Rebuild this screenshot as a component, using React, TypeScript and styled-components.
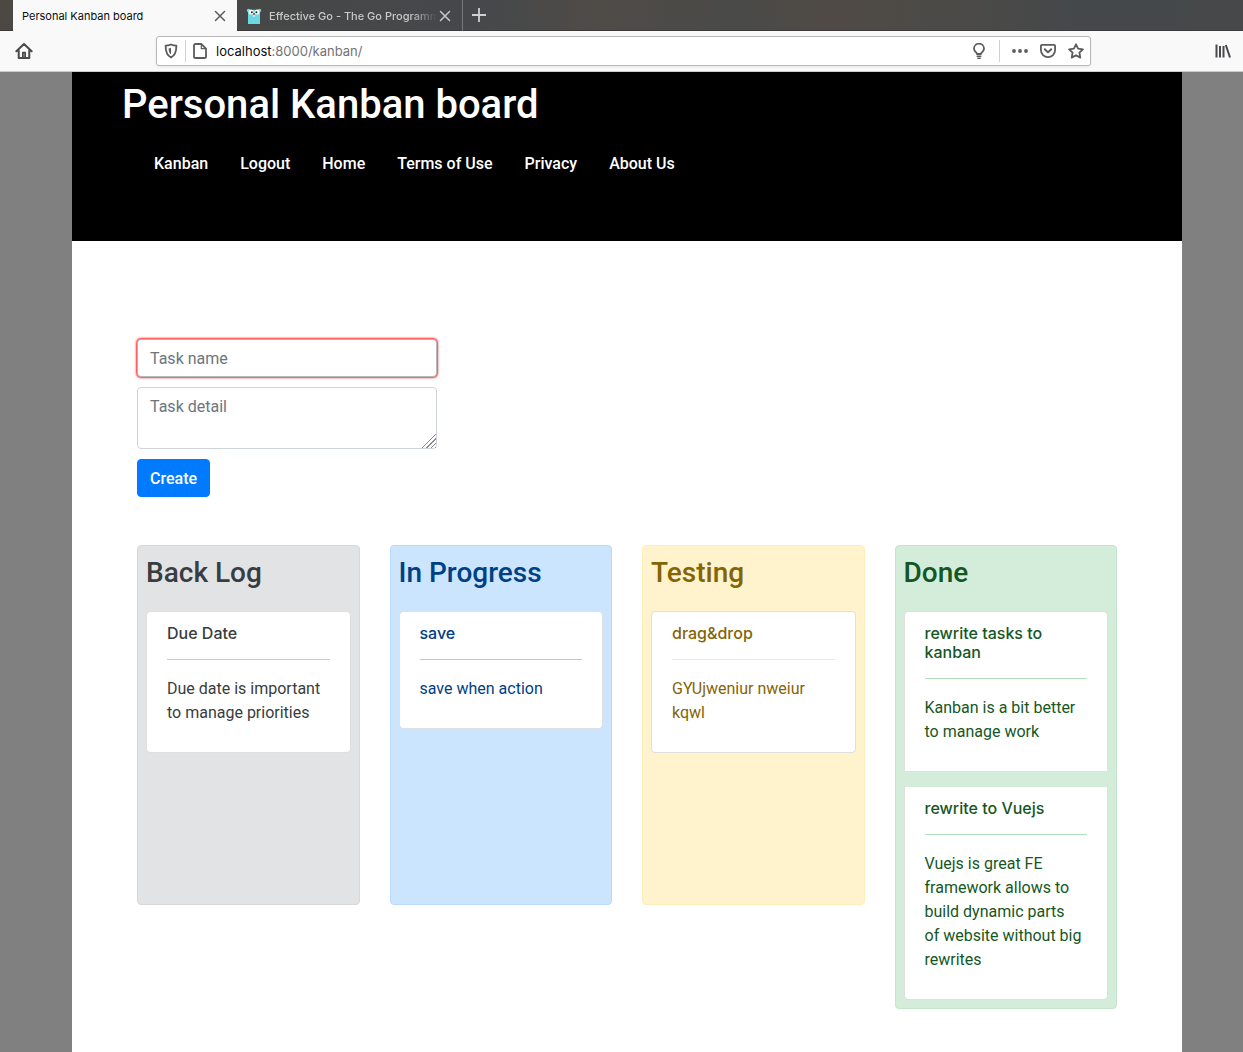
import React from "react";
import styled, { createGlobalStyle } from "styled-components";

const GlobalStyle = createGlobalStyle`
  *, *::before, *::after { box-sizing: border-box; }
  body {
    margin: 0;
    background: #808080;
    color: #212529;
    font-family: Roboto, "Liberation Sans", sans-serif;
    font-size: 16px;
    line-height: 24px;
  }
  h1, h2, h3, p { margin: 0; }
  button, input, textarea { font: inherit; }
`;

const Window = styled.div`
  display: flex;
  flex-direction: column;
  min-height: 100vh;
`;

const TabStrip = styled.div`
  display: flex;
  height: 31px;
  padding-left: 13px;
  font-family: Inter, "Liberation Sans", sans-serif;
  background: linear-gradient(
    90deg,
    #4d4843 0%,
    #474747 20%,
    #45484b 38%,
    #4f4b47 48%,
    #4a4a48 59%,
    #504a46 67%,
    #4b4a47 77%,
    #44484b 89%,
    #474849 100%
  );
  box-shadow: inset 0 -1px 0 #3a3a3b;
`;

const Tab = styled.div<{ $active?: boolean }>`
  display: flex;
  align-items: center;
  width: ${(p) => (p.$active ? "224px" : "226px")};
  padding: 0 9px;
  background: ${(p) => (p.$active ? "#f9f9fa" : "transparent")};
  border-right: ${(p) => (p.$active ? "none" : "1px solid #77777a")};
  color: ${(p) => (p.$active ? "#0c0c0d" : "#c9c9ca")};
`;

const TabTitle = styled.span<{ $fade?: boolean }>`
  flex: 1;
  margin-left: ${(p) => (p.$fade ? "7px" : "0")};
  overflow: hidden;
  white-space: nowrap;
  font-size: 11px;
  font-weight: ${(p) => (p.$fade ? 500 : 400)};
  line-height: 16px;
  mask-image: ${(p) => (p.$fade ? "linear-gradient(90deg, #000 85%, transparent)" : "none")};
`;

const IconButton = styled.button`
  display: flex;
  align-items: center;
  justify-content: center;
  flex: none;
  padding: 0;
  border: 0;
  background: none;
  color: inherit;
`;

const CloseTab = styled(IconButton)<{ $active?: boolean }>`
  color: ${(p) => (p.$active ? "#5c5c5e" : "#c9c9ca")};
`;

const NewTab = styled(IconButton)`
  width: 32px;
  height: 29px;
  color: #d0d0d1;
`;

const Toolbar = styled.div`
  display: grid;
  grid-template-columns: 156px minmax(0, 1fr) 152px;
  align-items: center;
  height: 41px;
  background: #f9f9fa;
  border-bottom: 1px solid #cccccc;
  color: #4a4a4c;
`;

const ToolbarSide = styled.div<{ $end?: boolean }>`
  display: flex;
  justify-content: ${(p) => (p.$end ? "flex-end" : "flex-start")};
  padding: ${(p) => (p.$end ? "0 12px 0 0" : "0 0 0 15px")};
`;

const UrlBar = styled.div`
  display: flex;
  align-items: center;
  height: 30px;
  padding: 0 6px;
  border: 1px solid #b8b8b9;
  border-radius: 3px;
  background: #ffffff;
  box-shadow: 0 1px 3px rgba(0, 0, 0, 0.08);
  color: #5c5c5e;
`;

const Separator = styled.span<{ $margin?: number }>`
  width: 1px;
  height: 22px;
  margin: 0 ${(p) => p.$margin ?? 0}px;
  background: #d2d2d3;
`;

const Url = styled.div`
  flex: 1;
  padding-left: 8px;
  font-family: Inter, "Liberation Sans", sans-serif;
  font-size: 13px;
  line-height: 20px;
  color: #737373;
`;

const Host = styled.span`
  color: #0c0c0d;
`;

const UrlActions = styled.div`
  display: flex;
  align-items: center;
  gap: 12px;
`;

const Page = styled.div`
  flex: 1;
  margin: 0 61px 0 72px;
  background: #ffffff;
`;

const Header = styled.header`
  padding: 9px 50px 65px;
  background: #000000;
  color: #ffffff;
`;

const Title = styled.h1`
  font-size: 40px;
  font-weight: 500;
  line-height: 48px;
`;

const Nav = styled.nav`
  display: flex;
  gap: 32px;
  padding: 23px 32px 0;
`;

const NavLink = styled.a`
  color: #ffffff;
  font-weight: 500;
  text-decoration: none;
`;

const Main = styled.main`
  padding: 98px 65px 43px;
`;

const Form = styled.form`
  display: flex;
  flex-direction: column;
  align-items: flex-start;
  gap: 10px;
  width: 300px;
`;

const TaskName = styled.input`
  width: 100%;
  height: 38px;
  padding: 6px 12px;
  border: 1px solid #b4b9be;
  border-radius: 4px;
  outline: none;
  box-shadow: 0 0 2px 1px #ff2a2a;
  &::placeholder { color: #6c757d; opacity: 1; }
`;

const TaskDetail = styled.textarea`
  display: block;
  width: 100%;
  height: 62px;
  padding: 7px 12px;
  border: 1px solid #ced4da;
  border-radius: 4px;
  &::placeholder { color: #6c757d; opacity: 1; }
  &::-webkit-resizer {
    background:
      linear-gradient(135deg, #ffffff 50%, transparent 50%),
      repeating-linear-gradient(135deg, #ffffff 0 2px, #8c8c8c 2px 3px);
  }
`;

const CreateButton = styled.button`
  height: 38px;
  padding: 2px 12px 0;
  border: 1px solid #007bff;
  border-radius: 4px;
  background: #007bff;
  color: #ffffff;
  font-weight: 500;
`;

const Board = styled.div`
  display: grid;
  grid-template-columns: repeat(4, minmax(0, 1fr));
  align-items: start;
  gap: 30px;
  padding-top: 48px;
`;

type Tone = { bg: string; border: string; text: string; rule: string };

const Column = styled.section<{ $tone: Tone }>`
  min-height: 360px;
  padding: 10px 8px 8px;
  border: 1px solid ${(p) => p.$tone.border};
  border-radius: 4px;
  background: ${(p) => p.$tone.bg};
  color: ${(p) => p.$tone.text};
`;

const ColumnTitle = styled.h2`
  padding-bottom: 21px;
  font-size: 28px;
  font-weight: 500;
  line-height: 34px;
`;

const CardList = styled.div`
  display: grid;
  gap: 14px;
`;

const Card = styled.article<{ $rule: string }>`
  padding: 12px 20px 27px;
  border: 1px solid #dfdfdf;
  background: #ffffff;
  background-clip: padding-box;
  &:first-child { border-top-left-radius: 4px; border-top-right-radius: 4px; }
  &:last-child { border-bottom-left-radius: 4px; border-bottom-right-radius: 4px; }
  & + & { border-top-color: transparent; }
  h3 {
    padding-bottom: 16px;
    border-bottom: 1px solid ${(p) => p.$rule};
    font-family: Inter, "Liberation Sans", sans-serif;
    font-size: 16px;
    font-weight: 500;
    line-height: 19px;
  }
  p { padding-top: 17px; }
`;

const columns: { title: string; tone: Tone; cards: { name: string; detail: string }[] }[] = [
  {
    title: "Back Log",
    tone: { bg: "#e2e3e5", border: "#d6d8db", text: "#383d41", rule: "#c8cbcf" },
    cards: [{ name: "Due Date", detail: "Due date is important to manage priorities" }],
  },
  {
    title: "In Progress",
    tone: { bg: "#cce5ff", border: "#b8daff", text: "#004085", rule: "#9fcdff" },
    cards: [{ name: "save", detail: "save when action" }],
  },
  {
    title: "Testing",
    tone: { bg: "#fff3cd", border: "#ffeeba", text: "#856404", rule: "#ffe8a1" },
    cards: [{ name: "drag&drop", detail: "GYUjweniur nweiur kqwl" }],
  },
  {
    title: "Done",
    tone: { bg: "#d4edda", border: "#c3e6cb", text: "#155724", rule: "#b1dfbb" },
    cards: [
      { name: "rewrite tasks to kanban", detail: "Kanban is a bit better to manage work" },
      {
        name: "rewrite to Vuejs",
        detail: "Vuejs is great FE framework allows to build dynamic parts of\u00a0website without big rewrites",
      },
    ],
  },
];

const links = ["Kanban", "Logout", "Home", "Terms of Use", "Privacy", "About Us"];

const Icon = ({ size = 16, children }: { size?: number; children: React.ReactNode }) => (
  <svg
    width={size}
    height={size}
    viewBox="0 0 16 16"
    fill="none"
    stroke="currentColor"
    strokeWidth="2"
    strokeLinecap="round"
    strokeLinejoin="round"
    aria-hidden="true"
  >
    {children}
  </svg>
);

const CloseIcon = () => (
  <Icon>
    <path d="M3.5 3.5l9 9M12.5 3.5l-9 9" strokeWidth="1.5" />
  </Icon>
);

const Gopher = () => (
  <svg width="16" height="16" viewBox="0 0 16 16" aria-hidden="true">
    <circle cx="2.5" cy="2.5" r="1.7" fill="#6ad7e5" />
    <circle cx="13.5" cy="2.5" r="1.7" fill="#6ad7e5" />
    <path d="M2 16V5C2 .5 14 .5 14 5v11z" fill="#6ad7e5" />
    <circle cx="5" cy="4" r="2.5" fill="#fff" />
    <circle cx="11" cy="4" r="2.5" fill="#fff" />
    <circle cx="5.8" cy="4.2" r="1" fill="#222" />
    <circle cx="10.4" cy="4.2" r="1" fill="#222" />
    <ellipse cx="8" cy="6.8" rx="1.8" ry="1.1" fill="#d9bd98" />
    <ellipse cx="8" cy="5.9" rx="1" ry=".7" fill="#222" />
    <path d="M7.3 7.3h1.4v1.4H7.3z" fill="#fff" />
  </svg>
);

export default function App() {
  return (
    <>
      <GlobalStyle />
      <Window>
        <TabStrip>
          <Tab $active>
            <TabTitle>Personal Kanban board</TabTitle>
            <CloseTab $active aria-label="Close tab"><CloseIcon /></CloseTab>
          </Tab>
          <Tab>
            <Gopher />
            <TabTitle $fade>Effective Go - The Go Programming Language</TabTitle>
            <CloseTab aria-label="Close tab"><CloseIcon /></CloseTab>
          </Tab>
          <NewTab aria-label="New tab">
            <Icon><path d="M8 1v14M1 8h14" strokeWidth="1.8" strokeLinecap="butt" /></Icon>
          </NewTab>
        </TabStrip>
        <Toolbar>
          <ToolbarSide>
            <IconButton aria-label="Home">
              <Icon size={18}>
                <path d="M1.2 8.2L8 1.7l6.8 6.5M3.3 7.5v6.7h9.4V7.5" strokeWidth="1.8" />
                <path d="M7 14V9.5h2V14" strokeWidth="1.6" />
              </Icon>
            </IconButton>
          </ToolbarSide>
          <UrlBar>
            <IconButton aria-label="Tracking protection">
              <Icon>
                <path
                  d="M8 1.5c-2 .9-3.6 1.2-5.4 1.2 0 5.6 1 9.6 5.4 11.8 4.4-2.2 5.4-6.2 5.4-11.8C11.6 2.7 10 2.4 8 1.5z"
                  strokeWidth="1.8"
                />
                <path d="M8 4.8c-.9.4-1.6.5-2.4.6.1 3 .8 4.9 2.4 6.2z" fill="currentColor" stroke="none" />
              </Icon>
            </IconButton>
            <Separator $margin={6} />
            <IconButton aria-label="Site information">
              <Icon>
                <path
                  d="M9.3 1H3.6A1.6 1.6 0 0 0 2 2.6v10.8A1.6 1.6 0 0 0 3.6 15h8.8a1.6 1.6 0 0 0 1.6-1.6V5.7z"
                  strokeWidth="1.8"
                />
                <path d="M9.3 1.4v4.3h4.3" strokeWidth="1.2" />
              </Icon>
            </IconButton>
            <Url><Host>localhost</Host>:8000/kanban/</Url>
            <UrlActions>
              <IconButton aria-label="Tips">
                <Icon>
                  <path d="M6 11c0-1.6-3-2.5-3-5.3a5 5 0 0 1 10 0C13 8.5 10 9.4 10 11z" strokeWidth="1.8" />
                  <path d="M6.2 13.2h3.6M6.8 15.2h2.4" strokeWidth="1.4" />
                </Icon>
              </IconButton>
              <Separator />
              <IconButton aria-label="Page actions">
                <Icon>
                  <path d="M2 8h.01M8 8h.01M14 8h.01" strokeWidth="3.8" />
                </Icon>
              </IconButton>
              <IconButton aria-label="Save to Pocket">
                <Icon>
                  <path
                    d="M2 1.8h12a1.1 1.1 0 0 1 1.1 1.1v4.2a7.1 7.1 0 0 1-14.2 0V2.9A1.1 1.1 0 0 1 2 1.8z"
                    strokeWidth="1.8"
                  />
                  <path d="M4.8 6.3L8 9.4l3.2-3.1" />
                </Icon>
              </IconButton>
              <IconButton aria-label="Bookmark this page">
                <Icon>
                  <path
                    d="M8 1.3l2.1 4.4 4.8.6-3.5 3.4.9 4.9L8 12.2l-4.3 2.4.9-4.9L1.1 6.3l4.8-.6z"
                    strokeWidth="1.8"
                  />
                </Icon>
              </IconButton>
            </UrlActions>
          </UrlBar>
          <ToolbarSide $end>
            <IconButton aria-label="Library">
              <Icon>
                <path
                  d="M1.5 1.5v13M5 3v11.500M8.5 3v11.500M10.8 2l4.2 12.500"
                  strokeWidth="2"
                  strokeLinecap="butt"
                />
              </Icon>
            </IconButton>
          </ToolbarSide>
        </Toolbar>
        <Page>
          <Header>
            <Title>Personal Kanban board</Title>
            <Nav>
              {links.map((label) => (
                <NavLink key={label} href="#">{label}</NavLink>
              ))}
            </Nav>
          </Header>
          <Main>
            <Form onSubmit={(e) => e.preventDefault()}>
              <TaskName aria-label="Task name" placeholder="Task name" />
              <TaskDetail aria-label="Task detail" placeholder="Task detail" />
              <CreateButton type="submit">Create</CreateButton>
            </Form>
            <Board>
              {columns.map((column) => (
                <Column key={column.title} $tone={column.tone}>
                  <ColumnTitle>{column.title}</ColumnTitle>
                  <CardList>
                    {column.cards.map((card) => (
                      <Card key={card.name} $rule={column.tone.rule}>
                        <h3>{card.name}</h3>
                        <p>{card.detail}</p>
                      </Card>
                    ))}
                  </CardList>
                </Column>
              ))}
            </Board>
          </Main>
        </Page>
      </Window>
    </>
  );
}
